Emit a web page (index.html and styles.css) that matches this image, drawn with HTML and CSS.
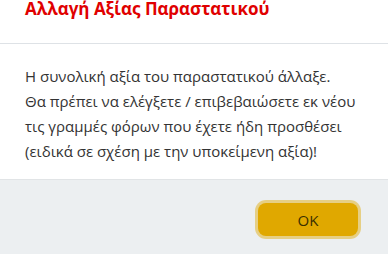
FILE: index.html
```html
<!DOCTYPE html>
<html lang="el">
<head>
<meta charset="utf-8">
<link rel="stylesheet" href="styles.css">
</head>
<body>
<div class="modal">
  <div class="modal-header">
    <h5 class="modal-title">Αλλαγή Αξίας Παραστατικού</h5>
  </div>
  <div class="modal-body">
    <p>Η συνολική αξία του παραστατικού άλλαξε.<br>Θα πρέπει να ελέγξετε / επιβεβαιώσετε εκ νέου τις γραμμές φόρων που έχετε ήδη προσθέσει (ειδικά σε σχέση με την υποκείμενη αξία)!</p>
  </div>
  <div class="modal-footer">
    <button class="btn">OK</button>
  </div>
</div>
</body>
</html>
```
FILE: styles.css
```css
html, body {
  margin: 0;
  padding: 0;
  background: #fff;
}
.modal {
  width: 388px;
  height: 254px;
  display: flex;
  flex-direction: column;
  font-family: "Open Sans", "Noto Sans", sans-serif;
  overflow: hidden;
}
.modal-header {
  padding: 0 25px 25px;
  border-bottom: 1px solid #dee2e6;
}
.modal-title {
  margin: 0;
  font-size: 17px;
  line-height: 18px;
  font-weight: 700;
  color: #e00000;
}
.modal-body {
  padding: 20px 25px 0;
  height: 135px;
  box-sizing: border-box;
}
.modal-body p {
  margin: 0;
  font-size: 15px;
  line-height: 25px;
  color: #333;
}
.modal-footer {
  flex: 1;
  background: #eceff1;
  border-top: 1px solid #e1e4e6;
  display: flex;
  justify-content: flex-end;
  align-items: flex-start;
  padding: 23px 30px 0 0;
}
.btn {
  width: 100px;
  height: 33px;
  border: none;
  border-radius: 8px;
  background: #e0a800;
  color: #3a3000;
  font-family: "Open Sans", "Noto Sans", sans-serif;
  font-size: 15px;
  box-shadow: 0 0 0 3px rgba(224, 168, 0, 0.45);
  padding: 0;
}
```
